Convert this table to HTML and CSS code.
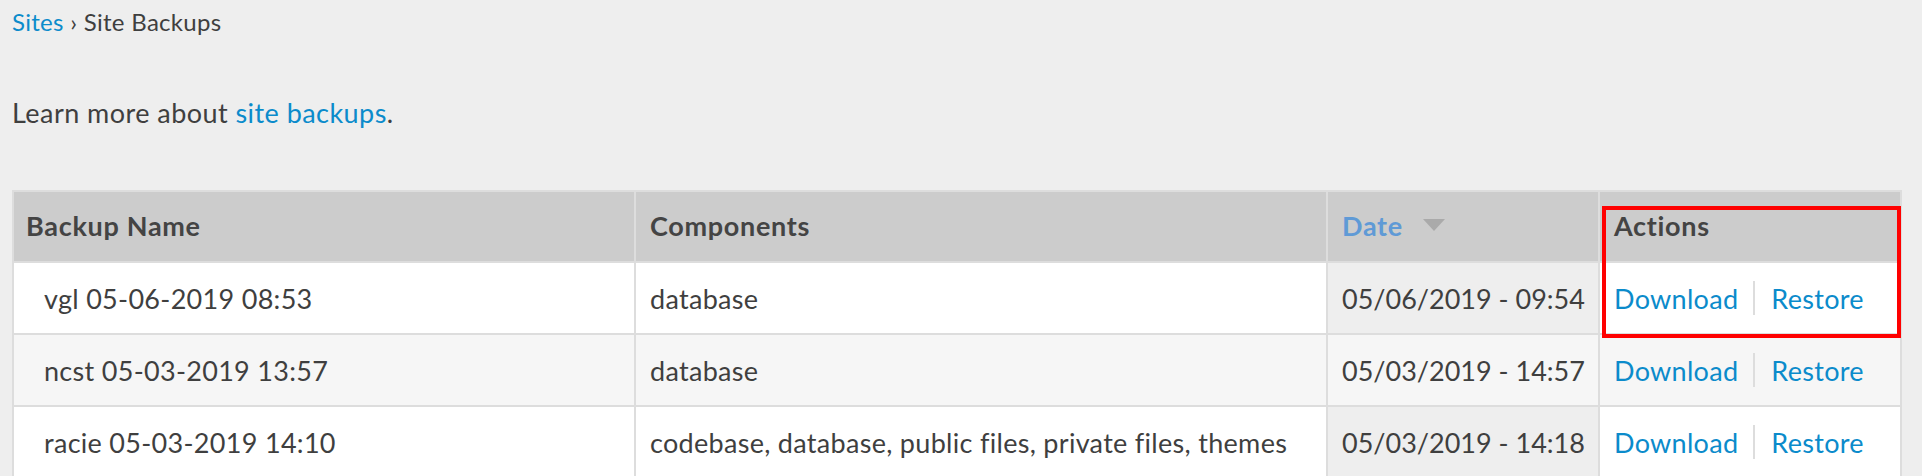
FILE: index.html
```html
<!DOCTYPE html>
<html>
<head>
<meta charset="utf-8">
<link rel="stylesheet" href="styles.css">
</head>
<body>
<div class="page">
  <div class="breadcrumb"><a class="link" href="#">Sites</a> › Site Backups</div>
  <p class="intro">Learn more about <a class="link" href="#">site backups</a>.</p>
  <div class="table-wrap">
    <table class="backups">
      <thead>
        <tr>
          <th class="c-name">Backup Name</th>
          <th class="c-comp">Components</th>
          <th class="c-date sorted"><span class="date-label">Date</span><span class="sort-arrow"></span></th>
          <th class="c-act">Actions</th>
        </tr>
      </thead>
      <tbody>
        <tr class="odd">
          <td class="c-name">vgl 05-06-2019 08:53</td>
          <td class="c-comp">database</td>
          <td class="c-date active">05/06/2019 - 09:54</td>
          <td class="c-act"><div class="actions"><a class="link" href="#">Download</a><span class="sep"></span><a class="link" href="#">Restore</a></div></td>
        </tr>
        <tr class="even">
          <td class="c-name">ncst 05-03-2019 13:57</td>
          <td class="c-comp">database</td>
          <td class="c-date active">05/03/2019 - 14:57</td>
          <td class="c-act"><div class="actions"><a class="link" href="#">Download</a><span class="sep"></span><a class="link" href="#">Restore</a></div></td>
        </tr>
        <tr class="odd">
          <td class="c-name">racie 05-03-2019 14:10</td>
          <td class="c-comp">codebase, database, public files, private files, themes</td>
          <td class="c-date active">05/03/2019 - 14:18</td>
          <td class="c-act"><div class="actions"><a class="link" href="#">Download</a><span class="sep"></span><a class="link" href="#">Restore</a></div></td>
        </tr>
      </tbody>
    </table>
    <div class="highlight"></div>
  </div>
</div>
</body>
</html>
```

FILE: styles.css
```css
html, body {
  margin: 0;
  padding: 0;
  background: #eeeeee;
}

body {
  font-family: "Lato", "Open Sans", sans-serif;
  color: #3f3f3f;
}

.page {
  padding: 0 20px 0 12px;
}

.link {
  color: #0b8bcb;
  text-decoration: none;
}

.breadcrumb {
  font-size: 24px;
  letter-spacing: 0.3px;
  line-height: 30px;
  padding-top: 7px;
}

.intro {
  font-size: 27px;
  letter-spacing: 0.45px;
  line-height: 34px;
  margin: 59px 0 0 0;
}

.table-wrap {
  position: relative;
  margin-top: 60px;
}

.backups {
  width: 100%;
  border-collapse: collapse;
  border: 2px solid #dddddd;
  font-size: 27px;
  letter-spacing: 0.3px;
  table-layout: fixed;
}

.backups th,
.backups td {
  border: 2px solid #dddddd;
  padding: 0 14px;
  text-align: left;
  white-space: nowrap;
}

.backups th {
  background: #cccccc;
  height: 67px;
  font-weight: 700;
  color: #444444;
  letter-spacing: 0.7px;
  vertical-align: middle;
  padding-bottom: 2px;
}

.backups th.c-name {
  padding-left: 12px;
}

.backups td {
  height: 70px;
}

.backups td.c-name {
  padding-left: 30px;
}

.backups td.c-date {
  letter-spacing: 0;
}

.c-name { width: 594px; }
.c-comp { width: 662px; }
.c-date { width: 242px; }

.odd td { background: #ffffff; }
.even td { background: #f6f6f6; }
.odd td.active { background: #eeeeee; }
.even td.active { background: #f6f6f6; }

.date-label {
  color: #5f9ad6;
}

.sort-arrow {
  display: inline-block;
  width: 0;
  height: 0;
  border-left: 11px solid transparent;
  border-right: 11px solid transparent;
  border-top: 12px solid #aaaaaa;
  margin-left: 20px;
  vertical-align: 5px;
}

.actions {
  display: flex;
  align-items: center;
}

.sep {
  display: inline-block;
  width: 2px;
  height: 34px;
  background: #dddddd;
  margin: 0 16px 0 15px;
}

.highlight {
  position: absolute;
  left: 1590px;
  top: 16px;
  width: 291px;
  height: 124px;
  border: 4px solid #ff0000;
  pointer-events: none;
}
```
